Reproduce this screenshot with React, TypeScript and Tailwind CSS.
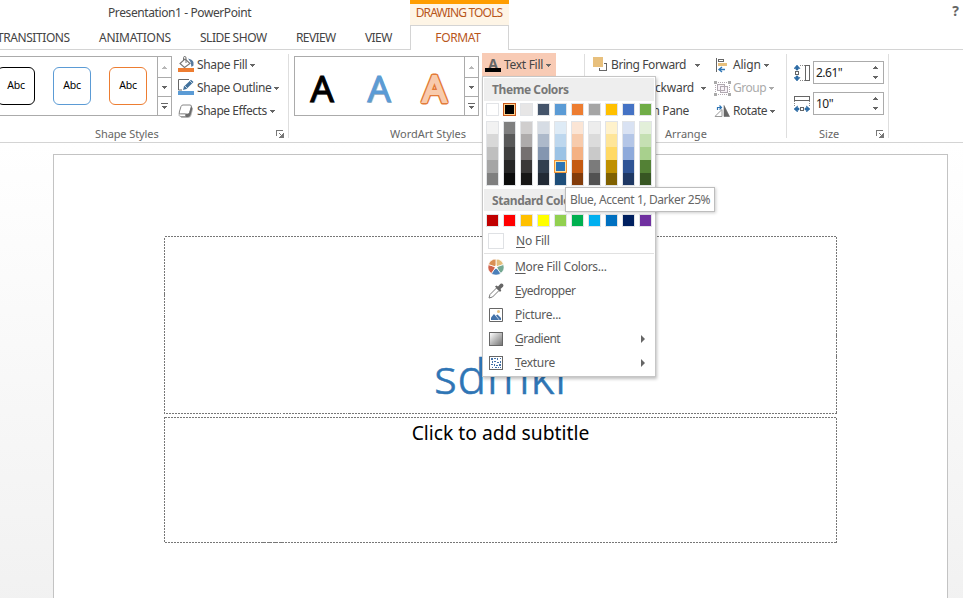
import type { ReactNode } from "react";

const themeTop = ["#ffffff", "#000000", "#e7e6e6", "#44546a", "#5b9bd5", "#ed7d31", "#a5a5a5", "#ffc000", "#4472c4", "#70ad47"];
const themeShades = [
  ["#f2f2f2", "#d8d8d8", "#bfbfbf", "#a5a5a5", "#7f7f7f"],
  ["#7f7f7f", "#595959", "#3f3f3f", "#262626", "#0c0c0c"],
  ["#d0cece", "#aeabab", "#757070", "#3a3838", "#171616"],
  ["#d6dce4", "#adb9ca", "#8496b0", "#323f4f", "#222a35"],
  ["#deebf6", "#bdd7ee", "#9cc3e5", "#2e75b5", "#1e4e79"],
  ["#fbe5d5", "#f7cbac", "#f4b183", "#c55a11", "#833c0b"],
  ["#ededed", "#dbdbdb", "#c9c9c9", "#7b7b7b", "#525252"],
  ["#fff2cc", "#fee599", "#ffd965", "#bf9000", "#7f6000"],
  ["#d9e2f3", "#b4c6e7", "#8eaadb", "#2f5496", "#1f3864"],
  ["#e2efd9", "#c5e0b3", "#a8d08d", "#538135", "#375623"],
];
const standard = ["#c00000", "#ff0000", "#ffc000", "#ffff00", "#92d050", "#00b050", "#00b0f0", "#0070c0", "#002060", "#7030a0"];

function Caret({ className = "text-[#666]" }: { className?: string }) {
  return (
    <svg width="5" height="3" viewBox="0 0 5 3" className={`shrink-0 ${className}`} shapeRendering="crispEdges">
      <path d="M0 0h5v1H4v1H3v1H2V2H1V1H0z" fill="currentColor" />
    </svg>
  );
}

function Up({ className = "text-[#666]" }: { className?: string }) {
  return <Caret className={`rotate-180 ${className}`} />;
}

function Launcher() {
  return (
    <svg width="8" height="8" viewBox="0 0 8 8" fill="none" stroke="#777" shapeRendering="crispEdges">
      <path d="M.5 6V.5H7M3 3l3 3M7.5 3v4.500H3M6.500 4v2.500H4" />
    </svg>
  );
}

function GalleryScroll() {
  return (
    <div className="flex w-[14px] flex-col border-l border-[#ababab]">
      <div className="flex h-[20px] items-center justify-center"><Up className="text-[#b8b8b8]" /></div>
      <div className="flex h-[20px] items-center justify-center border-y border-[#ababab]"><Caret /></div>
      <div className="flex flex-1 flex-col items-center justify-center gap-[2px]">
        <div className="h-px w-[7px] bg-[#666]" />
        <Caret />
      </div>
    </div>
  );
}

function FillIcon() {
  return (
    <svg width="16" height="16" viewBox="0 0 16 16" fill="none">
      <path d="M7 3L12 7.500L6.500 11.500L2 7.500Z" fill="#fff" stroke="#777" strokeWidth="1.100" />
      <path d="M5.500 5V1.500Q5.500.5 7 .5Q8 .5 8 2V7" stroke="#777" />
      <path d="M10 2.500Q15 3.500 15.500 6.500V9.500L13.500 11L12.500 6Z" fill="#56799c" />
      <path d="M0 12h16v4H0z" fill="#ed7d31" />
    </svg>
  );
}

function OutlineIcon() {
  return (
    <svg width="16" height="16" viewBox="0 0 16 16" fill="none">
      <path d="M11 .5H.5v10.500H4" stroke="#666" />
      <path d="M5 11L6 7.500L13 .8L15.500 3L8.500 10Z" fill="#41719c" />
      <path d="M7 7l2 2M12 2l2 2" stroke="#fff" strokeWidth=".7" />
      <path d="M0 12h16v4H0z" fill="#5b9bd5" />
    </svg>
  );
}

function EffectsIcon() {
  return (
    <svg width="16" height="15" viewBox="0 0 16 15">
      <path d="M5 3H13q2 0 2 2L13.500 11q-1 3-4 3H3Z" fill="#b5b5b5" />
      <path d="M5 1h7q1.800 0 1.300 2L11.500 8.500q-.5 1.500-2 1.500H2.500Q.8 10 1.300 8L3 2.500Q3.500 1 5 1Z" fill="#fff" stroke="#888" />
      <path d="M13.300 2L14.300 4.500L12.500 11Q11.800 13 10 13H7V10H9.500Q11 10 11.500 8.500Z" fill="#6c6c6c" />
      <path d="M1.200 9v2.500Q1.500 12.500 3 12.500H7.500V10H2.500Z" fill="#fff" stroke="#888" strokeWidth=".8" />
    </svg>
  );
}

function BringIcon() {
  return (
    <svg width="15" height="15" viewBox="0 0 15 15" fill="none" shapeRendering="crispEdges">
      <path d="M11 6.500h2.500v7h-7V11" stroke="#666" />
      <path d="M0 0h10v10H0z" fill="#e8c07d" />
    </svg>
  );
}

function AlignIcon() {
  return (
    <svg width="12" height="15" viewBox="0 0 12 15" fill="none">
      <path d="M.5 0v14" stroke="#666" shapeRendering="crispEdges" />
      <path d="M2.500 1.500h5v2h-5z" stroke="#666" fill="#fff" shapeRendering="crispEdges" />
      <path d="M2 5h9v3H2z" fill="#e8c07d" />
      <path d="M9 11.500H3M6 9l-3 2.500L6 14" stroke="#2e75b5" strokeWidth="1.400" />
    </svg>
  );
}

function GroupIcon() {
  return (
    <svg width="17" height="15" viewBox="0 0 17 15" fill="none" stroke="#b1a9b1" shapeRendering="crispEdges">
      <path d="M4 1.500h9M4 13.500h9M1.500 4v7M15.500 4v7" strokeDasharray="1 1" />
      <path d="M3.500 3.500h7v6h-7zM6.500 5.500h7v6h-7z" fill="#f7f2f7" />
      <path d="M6.500 5.500h4v4h-4z" />
      <path d="M0 0h3v3H0zM14 0h3v3h-3zM0 12h3v3H0zM14 12h3v3h-3z" fill="#aaa" stroke="none" />
    </svg>
  );
}

function RotateIcon() {
  return (
    <svg width="16" height="12" viewBox="0 0 16 12" fill="none">
      <path d="M8 4.500V11.500H.9Z" stroke="#999" fill="#fff" />
      <path d="M10 .5V11.500H15.500Z" fill="#666" stroke="#666" strokeWidth=".6" />
      <path d="M3.500 5V2.500H7M5.500.5l2 2-2 2" stroke="#2e75b5" strokeWidth="1.200" />
    </svg>
  );
}

function HeightIcon() {
  return (
    <svg width="16" height="16" viewBox="0 0 16 16" fill="none">
      <path d="M11.500.5h4v15h-4z" stroke="#666" shapeRendering="crispEdges" />
      <path d="M6 .5h5M6 15.500h5" stroke="#888" strokeDasharray="1 1" />
      <path d="M1.500 6.500h3v3h-3z" stroke="#666" shapeRendering="crispEdges" />
      <path d="M3 0L6 3.500H4V5H2V3.500H0ZM3 16L6 12.500H4V11H2v1.500H0Z" fill="#2e6ca5" stroke="#2e6ca5" strokeWidth=".6" />
    </svg>
  );
}

function WidthIcon() {
  return (
    <svg width="16" height="16" viewBox="0 0 16 16" fill="none">
      <path d="M.5 .5h15v4H.5z" stroke="#666" shapeRendering="crispEdges" />
      <path d="M.5 5v5M15.500 5v5" stroke="#888" strokeDasharray="1 1" />
      <path d="M6.500 11.500h3v3h-3z" stroke="#666" shapeRendering="crispEdges" />
      <path d="M0 13l3.500-3v2H5v2H3.500v2ZM16 13l-3.500-3v2H11v2h1.500v2Z" fill="#2e6ca5" stroke="#2e6ca5" strokeWidth=".6" />
    </svg>
  );
}

function WheelIcon() {
  return (
    <svg width="16" height="16" viewBox="0 0 16 16" stroke="#fff" strokeWidth=".8">
      <path d="M8 8V0A8 8 0 0 1 15.600 5.500Z" fill="#e3bd7b" />
      <path d="M8 8L15.600 5.500A8 8 0 0 1 12.700 14.500Z" fill="#74a892" />
      <path d="M8 8L12.700 14.500A8 8 0 0 1 3.300 14.500Z" fill="#4a7fb9" />
      <path d="M8 8L3.300 14.500A8 8 0 0 1 .4 5.500Z" fill="#d0624b" />
      <path d="M8 8L.4 5.500A8 8 0 0 1 8 0Z" fill="#d99054" />
      <path d="M8 5.500l.8 1.700 1.800.2-1.400 1.200.4 1.900L8 9.600l-1.600.9.400-1.900-1.400-1.200 1.800-.2Z" fill="#fff" stroke="none" />
    </svg>
  );
}

function DropperIcon() {
  return (
    <svg width="16" height="16" viewBox="0 0 16 16" fill="none">
      <path d="M8.500 5L2 11.500L1 15L4.500 14L11 7.500Z" fill="#fff" stroke="#777" />
      <path d="M7 3.500L8.500 2.500L10 3.500L12.500.8Q14 .2 15 1.200Q16 2.500 15 3.700L12.500 6L13.300 7.500L12 9Z" fill="#666" />
    </svg>
  );
}

function PictureIcon() {
  return (
    <svg width="14" height="14" viewBox="0 0 14 14">
      <path d="M.5.5h13v13H.5z" fill="#fff" stroke="#666" />
      <path d="M2 12V9.500L5 6L10 12Z" fill="#4472a8" />
      <path d="M7 7.500L8.500 6.500L12 10v2h-1.500Z" fill="#4472a8" />
      <circle cx="9.500" cy="3.500" r="1.500" fill="#e8c07d" />
    </svg>
  );
}

function TextureIcon() {
  return (
    <svg width="14" height="14" viewBox="0 0 14 14" shapeRendering="crispEdges">
      <path d="M.5.5h13v13H.5z" fill="#fff" stroke="#666" />
      <path d="M2 2h2v2H2zM5 2h2v1H5zM8 2h1v2H8zM11 2h1v1h-1zM3 5h1v2H3zM5 5h2v1H5zM8 6h2v1H8zM11 5h1v2h-1zM2 8h2v1H2zM5 8h1v2H5zM7 9h2v1H7zM10 8h2v2h-2zM3 11h1v1H3zM6 11h2v1H6zM9 11h1v1H9zM11 11h1v1h-1z" fill="#4472a8" />
    </svg>
  );
}

function Swatch({ color, selected = false }: { color: string; selected?: boolean }) {
  return (
    <div className={selected ? "size-[13px] border border-[#c8571b] p-px bg-[#ffd28e]" : "size-[13px] border border-[#e2e4e7]"}>
      <div className="size-full" style={{ backgroundColor: color }} />
    </div>
  );
}

function Item({ icon, first, rest, tracking, arrow = false }: { icon: ReactNode; first: string; rest: string; tracking: string; arrow?: boolean }) {
  return (
    <div className="flex h-6 items-center pl-[4px] pr-[9px] text-[#5a5a5a]">
      <div className="flex w-4 justify-center">{icon}</div>
      <span className={`ml-[11px] flex-1 ${tracking}`}><span className="underline underline-offset-2">{first}</span>{rest}</span>
      {arrow && <div className="h-0 w-0 border-y-[4px] border-l-[4px] border-y-transparent border-l-[#666]" />}
    </div>
  );
}

function SizeField({ icon, value }: { icon: ReactNode; value: string }) {
  return (
    <div className="flex items-center gap-[3px]">
      {icon}
      <div className="flex h-[23px] w-[71px] items-center justify-between border border-[#ababab] pl-[2px] pr-[5px] text-[#222]">
        <span className="tracking-[-0.5px]">{value}</span>
        <div className="flex flex-col gap-[7px]"><Up /><Caret /></div>
      </div>
    </div>
  );
}

function DashedFrame() {
  return (
    <svg className="absolute inset-0 size-full" fill="none">
      <rect x=".5" y=".5" width="672" height="100%" className="h-[calc(100%-1px)]" stroke="#777" strokeDasharray="2 1" shapeRendering="crispEdges" />
    </svg>
  );
}

export default function App() {
  return (
    <div className="relative flex h-[598px] w-[963px] flex-col overflow-hidden bg-white font-['Noto_Sans','Open_Sans',sans-serif] text-[12px] leading-4 whitespace-nowrap text-[#444]">
      <header className="flex h-[50px] shrink-0">
        <div className="flex w-[410px] flex-col border-b border-[#d4d4d4]">
          <div className="h-[25px] pl-[108px] pt-[5px] tracking-[-0.4px]">Presentation1 - PowerPoint</div>
          <nav className="flex pt-[5px] text-[12px]">
            <span className="-ml-[3px] w-[102px] tracking-[-0.43px]">TRANSITIONS</span>
            <span className="w-[101px] tracking-[-0.25px]">ANIMATIONS</span>
            <span className="w-[96px] tracking-[-0.48px]">SLIDE SHOW</span>
            <span className="w-[69px] tracking-[-0.6px]">REVIEW</span>
            <span className="tracking-[-0.6px]">VIEW</span>
          </nav>
        </div>
        <div className="flex w-[99px] flex-col text-center text-[#b8561b]">
          <div className="h-[25px] border-t-4 border-[#ff9d00] bg-[#fef5e6] pt-px pr-px tracking-[-0.85px]">DRAWING TOOLS</div>
          <div className="h-[25px] border-x border-t border-[#d4d4d4] pt-[4px] pr-[3px] tracking-[-0.35px]">FORMAT</div>
        </div>
        <div className="flex-1 border-b border-[#d4d4d4] pr-[4px] pt-[3px] text-right text-[14px] font-bold text-[#666]">?</div>
      </header>

      <section className="flex h-[93px] shrink-0 border-b border-[#d4d4d4]">
        <div className="flex w-[288px] flex-col">
          <div className="flex h-[76px]">
            <div className="mt-[6px] flex h-[60px] w-[172px] border border-l-0 border-[#ababab]">
              <div className="flex flex-1 items-center overflow-hidden text-[10.500px] tracking-[-0.3px] text-black">
                <div className="-ml-[3px] mr-[18px] flex h-[38px] w-[38px] shrink-0 items-center justify-center rounded-[6px] border border-black pb-[2px]">Abc</div>
                <div className="mr-[18px] flex h-[38px] w-[38px] shrink-0 items-center justify-center rounded-[6px] border border-[#5b9bd5] pb-[2px]">Abc</div>
                <div className="flex h-[38px] w-[38px] shrink-0 items-center justify-center rounded-[6px] border border-[#ed7d31] pb-[2px]">Abc</div>
              </div>
              <GalleryScroll />
            </div>
            <div className="ml-[6px] flex flex-col gap-[7px] pt-[7px]">
              <div className="flex h-4 items-center gap-[3px]"><div className="-mt-[2px]"><FillIcon /></div><span className="tracking-[-0.32px]">Shape Fill</span><Caret /></div>
              <div className="flex h-4 items-center gap-[3px]"><div className="-mt-[2px]"><OutlineIcon /></div><span className="tracking-[-0.4px]">Shape Outline</span><Caret /></div>
              <div className="flex h-4 items-center gap-[3px]"><EffectsIcon /><span className="tracking-[-0.45px]">Shape Effects</span><Caret /></div>
            </div>
          </div>
          <div className="flex items-center pl-[95px] text-[11px] text-[#666]">
            <span className="w-[181px] tracking-[-0.1px]">Shape Styles</span><Launcher />
          </div>
        </div>
        <div className="mt-1 h-[84px] w-px bg-[#dedede]" />
        <div className="flex w-[295px] flex-col">
          <div className="flex h-[76px]">
            <div className="ml-[5px] mt-[6px] flex h-[60px] w-[185px] border border-[#ababab]">
              <div className="flex flex-1 items-center pt-[5px]">
                <svg width="169" height="50" viewBox="0 0 169 50" className="font-['Noto_Sans',sans-serif] text-[37px]">
                  <g textAnchor="middle">
                    <text x="28" y="39" opacity=".25">A</text>
                    <text x="27" y="38" fill="#000" stroke="#000" strokeWidth="1">A</text>
                    <text x="85" y="39" opacity=".25">A</text>
                    <text x="84" y="38" fill="#5b9bd5" stroke="#5b9bd5" strokeWidth=".8">A</text>
                    <text x="139.500" y="38" fill="#ed7d31" stroke="#e37b38" strokeWidth="4.800" strokeLinejoin="round">A</text>
                    <text x="139.500" y="38" fill="#f8cbad" stroke="#f8cbad" strokeWidth="2">A</text>
                  </g>
                </svg>
              </div>
              <GalleryScroll />
            </div>
            <div className="ml-[3px] mt-[3px] flex h-[24px] w-[74px] items-center bg-[#f8cbb5] pl-[3px]">
              <div className="flex w-4 flex-col items-center">
                <span className="h-[10px] text-[14px] font-bold leading-[11px] text-[#666]">A</span>
                <div className="h-1 w-4 bg-black" />
              </div>
              <span className="ml-[3px] mr-[3px] tracking-[-0.3px]">Text Fill</span><Caret />
            </div>
          </div>
          <div className="pl-[101px] text-[11px] text-[#666]">WordArt Styles</div>
        </div>
        <div className="mt-1 h-[84px] w-px bg-[#dedede]" />
        <div className="flex w-[201px] flex-col">
          <div className="flex h-[76px] pt-[7px]">
            <div className="flex w-[129px] flex-col gap-[7px] pl-[8px]">
              <div className="flex h-4 items-center gap-[3px]"><div className="-mt-px"><BringIcon /></div><span className="w-[81px] tracking-[-0.42px]">Bring Forward</span><Caret /></div>
              <div className="flex h-4 items-center pl-[18px]"><span className="w-[90px] tracking-[-0.25px]">Send Backward</span><Caret /></div>
              <div className="h-4 w-[96px] text-right tracking-[-0.35px]">Selection Pane</div>
            </div>
            <div className="flex flex-col gap-[7px]">
              <div className="flex h-4 items-center gap-[3px]"><div className="flex w-4 justify-center"><AlignIcon /></div><span className="tracking-[-0.2px]">Align</span><Caret /></div>
              <div className="flex h-4 items-center gap-[3px] text-[#aaa]"><div className="w-4"><GroupIcon /></div><span className="tracking-[-0.45px]">Group</span><Caret className="text-[#aaa]" /></div>
              <div className="flex h-4 items-center gap-[3px]"><RotateIcon /><span className="tracking-[-0.45px]">Rotate</span><Caret /></div>
            </div>
          </div>
          <div className="pl-[80px] text-[11px] text-[#666]">Arrange</div>
        </div>
        <div className="mt-1 h-[84px] w-px bg-[#dedede]" />
        <div className="flex w-[101px] flex-col">
          <div className="flex h-[76px] flex-col gap-[8px] pl-[7px] pt-[11px]">
            <SizeField icon={<HeightIcon />} value={'2.61"'} />
            <SizeField icon={<WidthIcon />} value={'10"'} />
          </div>
          <div className="flex items-center pl-[32px] text-[11px] text-[#666]"><span className="w-[57px]">Size</span><Launcher /></div>
        </div>
        <div className="mt-1 h-[84px] w-px bg-[#dedede]" />
      </section>

      <main className="flex-1 bg-linear-to-b from-white to-[#f1f1f1] pl-[53px] pt-[11px]">
        <div className="flex h-[460px] w-[895px] flex-col gap-[3px] border border-[#c3c3c3] bg-white pl-[110px] pt-[81px]">
          <div className="relative flex h-[178px] w-[673px] items-end justify-center pb-[8px] font-['Noto_Sans',sans-serif] text-[48px] font-light leading-[60px] tracking-[0.7px] text-[#2e75b5] [-webkit-text-stroke:0.6px_#2e75b5]">
            <DashedFrame />
            sdmki
          </div>
          <div className="relative flex h-[126px] w-[673px] justify-center pt-[2px] text-[19.300px] leading-[27px] text-black">
            <DashedFrame />
            Click to add subtitle
          </div>
        </div>
      </main>

      <div className="absolute left-[482px] top-[76px] flex h-[301px] w-[174px] flex-col border border-[#c6c6c6] bg-white p-px shadow-[1px_2px_3px_rgba(0,0,0,0.25)]">
        <div className="flex h-[23px] items-center bg-[#eee] pl-[8px] pt-[2px] font-bold tracking-[-0.42px] text-[#777]">Theme Colors</div>
        <div className="mt-[2px] flex gap-1 pl-[2px]">
          {themeTop.map((c, i) => <Swatch key={c} color={c} selected={i === 1} />)}
        </div>
        <div className="mt-[5px] flex gap-1 pl-[2px]">
          {themeShades.map((col, i) => (
            <div key={i} className="h-[65px] w-[13px] border border-[#e2e4e7]">
              {col.map((c, j) => (
                <div key={c} className={j === 0 || j === 4 ? "h-3" : "h-[13px]"} style={{ backgroundColor: c }}>
                  {i === 4 && j === 3 && <div className="-ml-px h-[13px] w-[13px] border border-[#ef9439]"><div className="size-full border border-[#ffe29e]" /></div>}
                </div>
              ))}
            </div>
          ))}
        </div>
        <div className="mt-[3px] flex h-[23px] items-center bg-[#eee] pl-[8px] pt-[2px] font-bold tracking-[-0.42px] text-[#777]">Standard Colors</div>
        <div className="mt-[3px] flex gap-1 pl-[2px]">
          {standard.map((c) => <Swatch key={c} color={c} />)}
        </div>
        <div className="flex h-[27px] items-center border-b border-[#e1e1e1] pl-[4px] pt-[2px] text-[#5a5a5a]">
          <div className="size-4 border border-[#dfe1e4]" />
          <span className="ml-[12px] tracking-[-0.2px]"><span className="underline underline-offset-2">N</span>o Fill</span>
        </div>
        <div className="pt-px">
          <Item icon={<WheelIcon />} first="M" rest="ore Fill Colors..." tracking="tracking-[-0.28px]" />
          <Item icon={<DropperIcon />} first="E" rest="yedropper" tracking="tracking-[-0.5px]" />
          <Item icon={<PictureIcon />} first="P" rest="icture..." tracking="tracking-[-0.3px]" />
          <Item icon={<div className="size-[14px] border border-[#666] bg-linear-to-br from-white to-[#777]" />} first="G" rest="radient" tracking="tracking-[-0.5px]" arrow />
          <Item icon={<TextureIcon />} first="T" rest="exture" tracking="tracking-[-0.3px]" arrow />
        </div>
      </div>
      <div className="absolute left-[565px] top-[187px] flex h-[25px] w-[150px] items-center border border-[#bdbdbd] bg-white pl-[4px] tracking-[-0.41px] text-[#666] shadow-[1px_1px_3px_rgba(0,0,0,0.2)]">Blue, Accent 1, Darker 25%</div>
    </div>
  );
}
